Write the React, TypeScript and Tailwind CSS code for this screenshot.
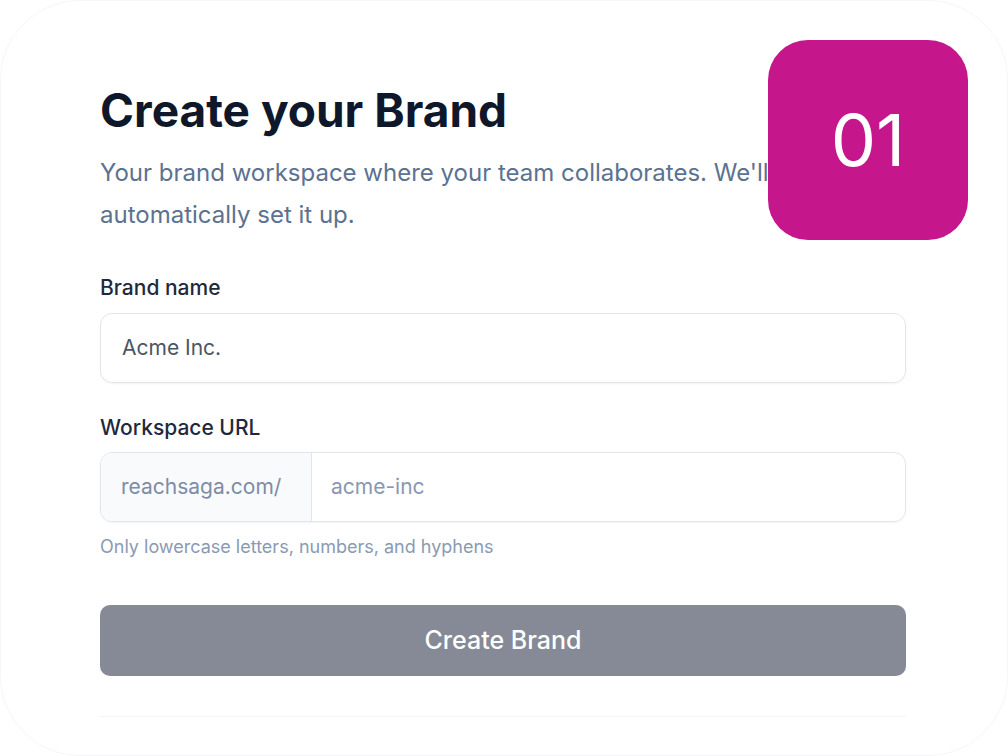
import React from "react";

export default function App() {
  return (
    <div className="w-[1008px] h-[756px] bg-white overflow-hidden relative" style={{ fontFamily: 'Inter, "Liberation Sans", Arial, sans-serif' }}>
      <div className="absolute inset-0 rounded-[80px] border border-[#f6f6f8] pointer-events-none" />
      <div className="relative pl-[100px] pr-[102px] pt-[84px]">
        <h1 className="text-[46px] leading-[52px] font-bold text-[#0f172a]">Create your Brand</h1>
        <p className="mt-[16px] text-[24px] leading-[42px] text-[#5b7290] w-[800px]">
          Your brand workspace where your team collaborates. We'll automatically set it up.
        </p>
        <div className="mt-[40px]">
          <label className="block text-[21px] leading-[24px] font-medium text-[#1e293b]">Brand name</label>
          <div className="mt-[13px] h-[70px] rounded-[12px] border border-[#e2e6ec] shadow-[0_1px_2px_rgba(0,0,0,0.05)] flex items-center px-[21px] text-[21px] text-[#4b5563]">
            Acme Inc.
          </div>
        </div>
        <div className="mt-[33px]">
          <label className="block text-[21px] leading-[24px] font-medium text-[#1e293b]">Workspace URL</label>
          <div className="mt-[12px] h-[70px] rounded-[12px] border border-[#e2e6ec] shadow-[0_1px_2px_rgba(0,0,0,0.05)] flex overflow-hidden text-[21px]">
            <div className="w-[211px] bg-[#f8fafc] border-r border-[#e2e6ec] flex items-center pl-[20px] text-[#7d8ca5]">reachsaga.com/</div>
            <div className="flex-1 flex items-center pl-[19px] text-[#8798b2]">acme-inc</div>
          </div>
          <p className="mt-[14px] text-[18px] leading-[22px] text-[#8a9ab3]">Only lowercase letters, numbers, and hyphens</p>
        </div>
        <button className="mt-[47px] w-full h-[71px] rounded-[10px] bg-[#858a96] text-white text-[25px] font-medium flex items-center justify-center">
          Create Brand
        </button>
        <div className="mt-[40px] h-px bg-[#f1f4f8]" />
      </div>
      <div className="absolute left-[768px] top-[40px] w-[200px] h-[200px] rounded-[40px] bg-[#c5178b] flex items-center justify-center text-white text-[72px] font-normal">
        01
      </div>
    </div>
  );
}
